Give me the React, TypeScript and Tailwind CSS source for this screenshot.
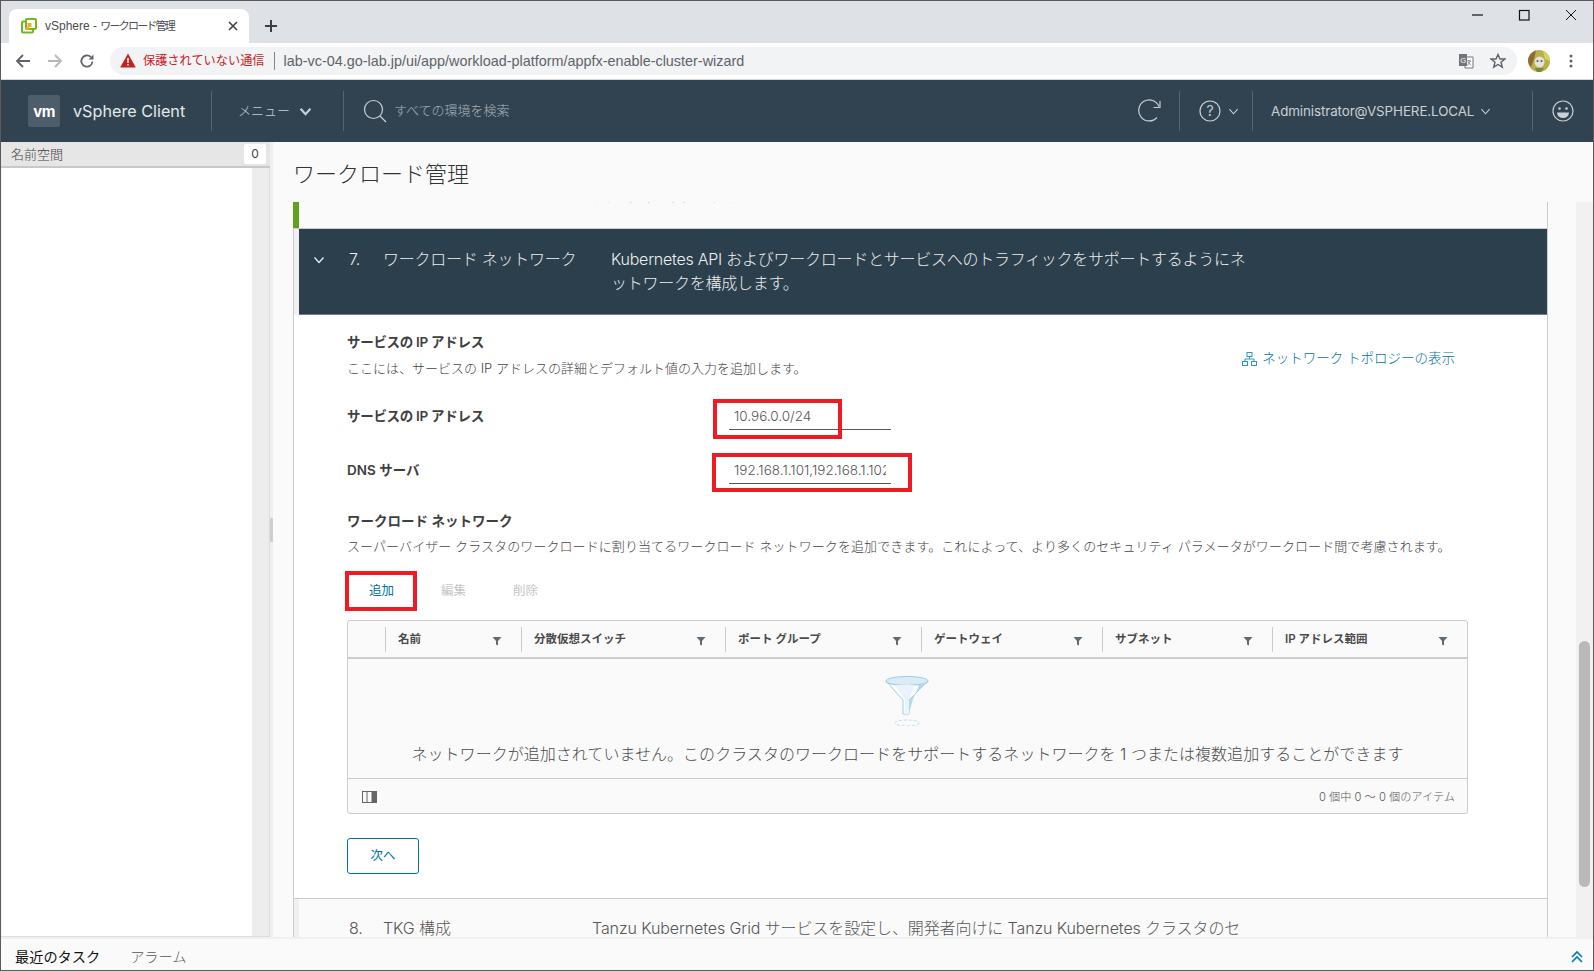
import React from "react";

function Filter() {
  return (
    <svg width="10" height="10" viewBox="0 0 10 10" className="shrink-0 mt-[4px]">
      <path d="M0.5 1H9.5L6 5V9.5L4 8.5V5Z" fill="#5f6b74" />
    </svg>
  );
}

function Chevron({ size = 12, color = "#c9d0d5", w = 1.5 }: { size?: number; color?: string; w?: number }) {
  return (
    <svg width={size} height={size} viewBox="0 0 12 12" className="shrink-0">
      <path d="M1.5 3.5L6 8.5L10.5 3.5" fill="none" stroke={color} strokeWidth={w} />
    </svg>
  );
}

const cols: [string, number][] = [
  ["名前", 136],
  ["分散仮想スイッチ", 204],
  ["ポート グループ", 196],
  ["ゲートウェイ", 181],
  ["サブネット", 170],
  ["IP アドレス範囲", 195],
];

export default function App() {
  return (
    <div className="w-[1594px] h-[971px] overflow-hidden border border-[#5a5a5a] bg-white flex flex-col font-['Inter','Noto_Sans_CJK_JP',sans-serif] text-[#565656]">
      {/* tab strip */}
      <div className="h-[42px] shrink-0 bg-[#dee1e6] flex items-end pl-[8px]">
        <div className="w-[240px] h-[34px] bg-white rounded-t-lg flex items-center pl-[12px] pr-[10px]">
          <svg width="16" height="16" viewBox="0 0 16 16" className="shrink-0">
            <rect x="1" y="3.5" width="11" height="11" rx="1" fill="none" stroke="#72b62c" strokeWidth="2" />
            <rect x="5" y="1" width="10" height="10" rx="1" fill="#fff" stroke="#72b62c" strokeWidth="2" />
            <rect x="6.5" y="5" width="4" height="4" fill="#f5a81c" />
            <rect x="5" y="9" width="3" height="3" fill="#f5a81c" />
          </svg>
          <span className="ml-[8px] text-[12px] text-[#4a4d52] font-['Liberation_Sans','Noto_Sans_CJK_JP',sans-serif] whitespace-nowrap">vSphere - <span className="text-[11px] tracking-[-1.8px]">ワークロード管理</span></span>
          <svg width="10" height="10" viewBox="0 0 10 10" className="ml-auto mr-[1px]">
            <path d="M1 1L9 9M9 1L1 9" stroke="#3c4043" strokeWidth="1.6" />
          </svg>
        </div>
        <svg width="12" height="12" viewBox="0 0 12 12" className="ml-[16px] mb-[11px]">
          <path d="M6 0V12M0 6H12" stroke="#3c4043" strokeWidth="2" />
        </svg>
        <div className="ml-auto flex self-start items-center h-[28px] text-[#111]">
          <svg width="12" height="12" viewBox="0 0 12 12" className="mr-[34px]"><path d="M0 6H11" stroke="#111" strokeWidth="1.2" /></svg>
          <svg width="12" height="12" viewBox="0 0 12 12" className="mr-[35px]"><rect x="1.5" y="1.5" width="9.5" height="9.5" fill="none" stroke="#111" strokeWidth="1.2" /></svg>
          <svg width="12" height="12" viewBox="0 0 12 12" className="mr-[16px]"><path d="M1 1L11 11M11 1L1 11" stroke="#111" strokeWidth="1" /></svg>
        </div>
      </div>
      {/* toolbar */}
      <div className="h-[37px] shrink-0 bg-white border-b border-[#d5d5d5] flex items-center pb-[1px]">
        <svg width="16" height="16" viewBox="0 0 16 16" className="ml-[14px]"><path d="M15 8H2M8 2L2 8L8 14" fill="none" stroke="#5f6368" strokeWidth="1.8" /></svg>
        <svg width="16" height="16" viewBox="0 0 16 16" className="ml-[16px]"><path d="M1 8H14M8 2L14 8L8 14" fill="none" stroke="#b4b7bb" strokeWidth="1.8" /></svg>
        <svg width="16" height="16" viewBox="0 0 16 16" className="ml-[16px]"><path d="M13.5 8.5A5.6 5.6 0 1 1 11.8 4" fill="none" stroke="#5f6368" strokeWidth="1.8" /><path d="M14.5 1.5V6.5H9.5Z" fill="#5f6368" /></svg>
        <div className="ml-[15px] w-[1407px] h-[28px] rounded-full bg-[#f1f3f4] flex items-center pl-[10px] pr-[11px] font-['Liberation_Sans','Noto_Sans_CJK_JP',sans-serif]">
          <svg width="16" height="15" viewBox="0 0 16 15" className="shrink-0">
            <path d="M8 0.5L15.8 14.5H0.2Z" fill="#c5221f" />
            <path d="M7.2 5H8.8V10H7.2ZM7.2 11H8.8V12.6H7.2Z" fill="#fff" />
          </svg>
          <span className="ml-[7px] mt-[2px] text-[12.2px] text-[#c5221f] whitespace-nowrap">保護されていない通信</span>
          <span className="ml-[9px] w-px h-[18px] bg-[#80868b]" />
          <span className="ml-[9px] mt-[2px] text-[14.4px] text-[#5f6368] whitespace-nowrap">lab-vc-04.go-lab.jp/ui/app/workload-platform/appfx-enable-cluster-wizard</span>
          <svg width="16" height="16" viewBox="0 0 16 16" className="ml-auto shrink-0">
            <path d="M7 4H15V15H7Z" fill="#fff" stroke="#70757a" />
            <path d="M9 8H13M11 7V8M12.5 8L9.5 12.5M9.8 9L13 12.5" fill="none" stroke="#70757a" strokeWidth="0.8" />
            <rect x="1" y="1" width="8" height="12" fill="#70757a" />
            <text x="2.3" y="9.5" fontSize="7.5" fill="#fff" fontFamily="Liberation Sans">G</text>
          </svg>
          <svg width="16" height="16" viewBox="0 0 16 16" className="ml-[16px] shrink-0">
            <path d="M8 1.5L10 6H14.8L11 9.2L12.3 14.2L8 11.5L3.7 14.2L5 9.2L1.2 6H6Z" fill="none" stroke="#5f6368" strokeWidth="1.4" />
          </svg>
        </div>
        <svg width="22" height="22" viewBox="0 0 22 22" className="ml-[11px] shrink-0">
          <circle cx="11" cy="11" r="11" fill="#b6b04a" />
          <path d="M0 11A11 11 0 0 1 8 0.5L6 9L3 17A11 11 0 0 1 0 11Z" fill="#8b6a34" />
          <path d="M15 1A11 11 0 0 1 22 11L17 9Z" fill="#d9d267" />
          <ellipse cx="11.5" cy="12" rx="5" ry="5.5" fill="#e4e2da" />
          <circle cx="9.5" cy="11" r="1" fill="#555" />
          <circle cx="13.5" cy="11" r="1" fill="#555" />
          <path d="M7 18L16 18L13 22H9Z" fill="#7c8a36" />
        </svg>
        <svg width="4" height="14" viewBox="0 0 4 14" className="ml-[19px]">
          <circle cx="2" cy="2" r="1.5" fill="#5f6368" />
          <circle cx="2" cy="7" r="1.5" fill="#5f6368" />
          <circle cx="2" cy="12" r="1.5" fill="#5f6368" />
        </svg>
      </div>
      {/* nav */}
      <div className="h-[62px] shrink-0 bg-[#314351] flex items-center text-[#c9d0d5]">
        <div className="ml-[27px] w-[32px] h-[32px] rounded-[2px] bg-[#4e5d6a] flex items-center justify-center text-white font-bold text-[15px] tracking-[-0.5px] leading-none">vm</div>
        <span className="ml-[13px] w-[138px] text-[16.2px] text-[#e4e8ea] whitespace-nowrap">vSphere Client</span>
        <span className="w-px h-[40px] bg-[#55656f]" />
        <span className="ml-[26px] w-[53px] text-[13px] font-light whitespace-nowrap">メニュー</span>
        <span className="ml-[8px]"><Chevron size={13} w={2} /></span>
        <span className="ml-[31px] w-px h-[40px] bg-[#55656f]" />
        <svg width="24" height="24" viewBox="0 0 24 24" className="ml-[19px]">
          <circle cx="10.5" cy="10.5" r="9" fill="none" stroke="#c9d0d5" strokeWidth="1.2" />
          <path d="M17 17L23 23" stroke="#c9d0d5" strokeWidth="1.2" />
        </svg>
        <span className="ml-[7px] text-[13px] font-light text-[#a9b4bb] whitespace-nowrap">すべての環境を検索</span>
        <svg width="24" height="24" viewBox="0 0 24 24" className="ml-auto">
          <path d="M19 18.5A10.5 10.5 0 1 1 21 7.5" fill="none" stroke="#c9d0d5" strokeWidth="1.2" />
          <path d="M15.5 8.5H22V2" fill="none" stroke="#c9d0d5" strokeWidth="1.2" />
        </svg>
        <span className="ml-[17px] w-px h-[40px] bg-[#55656f]" />
        <svg width="22" height="22" viewBox="0 0 22 22" className="ml-[19px]">
          <circle cx="11" cy="11" r="10" fill="none" stroke="#c9d0d5" strokeWidth="1.2" />
          <text x="11" y="16" textAnchor="middle" fontSize="14" fill="#c9d0d5" fontFamily="Inter">?</text>
        </svg>
        <span className="ml-[7px]"><Chevron size={11} w={1.2} /></span>
        <span className="ml-[13px] w-px h-[40px] bg-[#55656f]" />
        <span className="ml-[18px] w-[203px] text-[13.4px] whitespace-nowrap tracking-[-0.1px]">Administrator@VSPHERE.LOCAL</span>
        <span className="ml-[6px]"><Chevron size={11} w={1.2} /></span>
        <span className="ml-[41px] w-px h-[40px] bg-[#55656f]" />
        <svg width="22" height="22" viewBox="0 0 22 22" className="ml-[19px] mr-[19px]">
          <circle cx="11" cy="11" r="10" fill="none" stroke="#c9d0d5" strokeWidth="1.2" />
          <circle cx="7.5" cy="8.5" r="1.3" fill="#c9d0d5" />
          <circle cx="14.5" cy="8.5" r="1.3" fill="#c9d0d5" />
          <path d="M5 12.5H17A6 5.5 0 0 1 5 12.5Z" fill="#c9d0d5" />
        </svg>
      </div>
      {/* body */}
      <div className="flex-1 min-h-0 flex bg-[#fafafa]">
        <div className="w-[269px] shrink-0 flex flex-col">
          <div className="h-[26px] shrink-0 bg-[#e6e6e6] border-b-2 border-[#c8c8c8] flex items-center pl-[10px] pr-[4px]">
            <span className="text-[13px] font-light text-[#444] pt-px">名前空間</span>
            <span className="ml-auto w-[22px] h-[20px] rounded-[2px] bg-white text-[12px] flex items-center justify-center text-[#444]">0</span>
          </div>
          <div className="flex-1 flex border-r border-b border-[#dcdcdc] pl-px">
            <div className="w-[250px] bg-white" />
            <div className="flex-1 bg-[#ededed]" />
          </div>
        </div>
        <div className="w-[3px] shrink-0 bg-[#f0f0f0] flex items-center pb-[20px]">
          <div className="w-[3px] h-[24px] bg-[#cfcfcf]" />
        </div>
        <div className="flex-1 min-w-0 flex flex-col">
          <div className="h-[60px] shrink-0 pl-[20px] pt-[16px] text-[22px] leading-[32px] font-light text-[#333] whitespace-nowrap">ワークロード管理</div>
          <div className="flex-1 min-h-0 flex">
            <div className="ml-[20px] w-[1255px] shrink-0 overflow-hidden border-r border-[#cccccc]">
              {/* clipped previous row */}
              <div className="h-[27px] flex border-b border-[#cccccc] overflow-hidden">
                <div className="w-[6px] bg-[#60a01e]" />
                <div className="ml-[293px] -mt-[14px] text-[12px] leading-[20px] font-light whitespace-nowrap">クラスタ サブネット マスク : 255.255.255.0</div>
              </div>
              {/* section 7 header */}
              <div className="border-l border-[#cccccc] flex">
                <div className="w-[5px] bg-[#f0f0f0]" />
                <div className="flex-1 h-[86px] bg-[#2b3f4d] border-b border-[#6d7c87] flex text-[16px] leading-[24px] tracking-[-0.25px] text-[#eeeeee] pt-[18px] font-light">
                  <div className="w-[50px] pl-[14px] pt-[7px]"><Chevron size={12} color="#eeeeee" w={1.3} /></div>
                  <div className="w-[34px]">7.</div>
                  <div className="w-[228px] whitespace-nowrap">ワークロード ネットワーク</div>
                  <div className="whitespace-nowrap">Kubernetes API およびワークロードとサービスへのトラフィックをサポートするようにネ<br />ットワークを構成します。</div>
                </div>
              </div>
              {/* section 7 body */}
              <div className="bg-white border-l border-[#cccccc] pl-[53px] pt-[17px] pb-[24px] w-full">
                <div className="w-[1121px]">
                  <div className="flex items-center justify-between">
                    <div>
                      <div className="h-[20px] text-[13.5px] tracking-[-0.3px] leading-[20px] font-semibold text-[#3f3f3f] whitespace-nowrap">サービスの IP アドレス</div>
                      <div className="mt-[6px] h-[20px] text-[13px] leading-[20px] font-light text-[#444] whitespace-nowrap">ここには、サービスの IP アドレスの詳細とデフォルト値の入力を追加します。</div>
                    </div>
                    <a className="flex items-center mr-[13px] mt-[7px] text-[13.5px] text-[#0072a3] font-light whitespace-nowrap">
                      <svg width="15" height="14" viewBox="0 0 15 14" className="mr-[5px]">
                        <rect x="5" y="0.5" width="5" height="4" fill="none" stroke="#2f96c6" />
                        <rect x="0.5" y="9.5" width="5" height="4" fill="none" stroke="#2f96c6" />
                        <rect x="9.5" y="9.5" width="5" height="4" fill="none" stroke="#2f96c6" />
                        <path d="M3 9.5V7H12V9.5M7.5 4.5V7" fill="none" stroke="#2f96c6" />
                      </svg>
                      ネットワーク トポロジーの表示
                    </a>
                  </div>
                  <div className="mt-[24px] flex items-center h-[28px]">
                    <div className="w-[382px] text-[13.5px] tracking-[-0.3px] font-semibold text-[#3f3f3f] whitespace-nowrap">サービスの IP アドレス</div>
                    <div className="relative">
                      <input readOnly value="10.96.0.0/24" className="block w-[162px] h-[28px] px-[5px] border-b border-[#565656] bg-transparent text-[13.5px] font-light text-[#565656] outline-none" />
                      <div className="absolute left-[-16px] top-[-3px] w-[129px] h-[40px] border-4 border-[#ed1c24]" />
                    </div>
                  </div>
                  <div className="mt-[26px] flex items-center h-[28px]">
                    <div className="w-[382px] text-[13.5px] font-semibold text-[#3f3f3f] whitespace-nowrap">DNS サーバ</div>
                    <div className="relative">
                      <input readOnly value="192.168.1.101,192.168.1.102" className="block w-[162px] h-[28px] px-[5px] border-b border-[#565656] bg-transparent text-[13.5px] font-light text-[#565656] outline-none" />
                      <div className="absolute left-[-17px] top-[-3px] w-[200px] h-[39px] border-4 border-[#ed1c24]" />
                    </div>
                  </div>
                  <div className="mt-[27px] h-[20px] text-[13.5px] leading-[20px] font-semibold text-[#3f3f3f] whitespace-nowrap">ワークロード ネットワーク</div>
                  <div className="mt-[5px] h-[20px] text-[13px] tracking-[0.08px] leading-[20px] font-light text-[#444] whitespace-nowrap">スーパーバイザー クラスタのワークロードに割り当てるワークロード ネットワークを追加できます。これによって、より多くのセキュリティ パラメータがワークロード間で考慮されます。</div>
                  <div className="mt-[17px] h-[36px] flex items-center text-[12.5px]">
                    <div className="relative ml-[22px] w-[72px] text-[#0072a3]">
                      追加
                      <div className="absolute left-[-24px] top-[-11px] w-[72px] h-[40px] border-4 border-[#ed1c24]" />
                    </div>
                    <div className="w-[72px] text-[#c5c5c5]">編集</div>
                    <div className="text-[#c5c5c5]">削除</div>
                  </div>
                  <div className="mt-[11px] h-[194px] border border-[#cccccc] rounded-[3px] bg-[#fafafa] flex flex-col">
                    <div className="h-[38px] shrink-0 border-b-2 border-[#cccccc] flex items-center">
                      <div className="w-[37px] shrink-0" />
                      {cols.map(([name, w]) => (
                        <div key={name} className="h-[25px] shrink-0 border-l border-[#cccccc] flex items-center pl-[12px] pr-[19px] justify-between text-[11.5px] font-semibold text-[#4a4a4a]" style={{ width: w }}>
                          <span className="whitespace-nowrap mt-[2px]">{name}</span>
                          <Filter />
                        </div>
                      ))}
                    </div>
                    <div className="h-[120px] shrink-0 border-b border-[#cccccc] flex flex-col items-center pt-[17px]">
                      <svg width="44" height="50" viewBox="0 0 44 50" className="-ml-[2px]">
                        <ellipse cx="22" cy="5" rx="21" ry="4.5" fill="#dcecf5" stroke="#9ccbe6" />
                        <path d="M1 5L18 24V38H24V24L43 5A21 4.5 0 0 1 1 5Z" fill="#fff" stroke="#9ccbe6" />
                        <path d="M30 9L24 24V38H20V24L10 9Z" fill="#e9f3f9" />
                        <path d="M42 6L24 24V38L28 23L34 9Z" fill="#b6d9ee" />
                        <ellipse cx="22" cy="47" rx="12" ry="3" fill="none" stroke="#b9dcef" strokeDasharray="3 2" />
                      </svg>
                      <div className="mt-[16px] text-[16px] tracking-[0.03px] leading-[24px] font-light text-[#4a4a4a] whitespace-nowrap">ネットワークが追加されていません。このクラスタのワークロードをサポートするネットワークを 1 つまたは複数追加することができます</div>
                    </div>
                    <div className="flex-1 flex items-center pl-[14px] pr-[12px] pt-[2px]">
                      <svg width="15" height="12" viewBox="0 0 15 12">
                        <rect x="0.5" y="0.5" width="14" height="11" fill="none" stroke="#666" />
                        <path d="M5 0.5V11.5M10 0.5V11.5" stroke="#666" />
                        <rect x="10" y="0.5" width="4.5" height="11" fill="#666" />
                      </svg>
                      <span className="ml-auto text-[11.2px] font-light text-[#565656] whitespace-nowrap">0 個中 0 ～ 0 個のアイテム</span>
                    </div>
                  </div>
                  <button className="block mt-[24px] w-[72px] h-[36px] border border-[#0072a3] rounded-[3px] text-[12.5px] text-[#0072a3]">次へ</button>
                </div>
              </div>
              {/* section 8 */}
              <div className="border-t border-l border-[#cccccc] flex h-[60px]">
                <div className="w-[5px] bg-[#f0f0f0]" />
                <div className="flex-1 bg-[#fafafa] flex text-[16px] tracking-[-0.1px] leading-[24px] font-light pt-[17px] text-[#565656]">
                  <div className="ml-[50px] w-[34px]">8.</div>
                  <div className="w-[209px] whitespace-nowrap">TKG 構成</div>
                  <div className="whitespace-nowrap">Tanzu Kubernetes Grid サービスを設定し、開発者向けに Tanzu Kubernetes クラスタのセ</div>
                </div>
              </div>
            </div>
            <div className="ml-[28px] w-[17px] shrink-0 bg-[#f1f1f1] relative">
              <div className="absolute left-[3px] top-[439px] w-[11px] h-[246px] rounded-[6px] bg-[#b9b9b9]" />
            </div>
          </div>
        </div>
      </div>
      {/* bottom bar */}
      <div className="h-[33px] shrink-0 bg-[#fafafa] border-t-2 border-[#f0f0f0] flex items-center pl-[14px] pr-[9px] pt-[5px] text-[14.2px] font-light">
        <span className="text-[#111] font-normal">最近のタスク</span>
        <span className="ml-[30px] text-[#565656]">アラーム</span>
        <svg width="14" height="14" viewBox="0 0 14 14" className="ml-auto">
          <path d="M2 7L7 2L12 7M2 12L7 7L12 12" fill="none" stroke="#0079b8" strokeWidth="1.6" />
        </svg>
      </div>
    </div>
  );
}
